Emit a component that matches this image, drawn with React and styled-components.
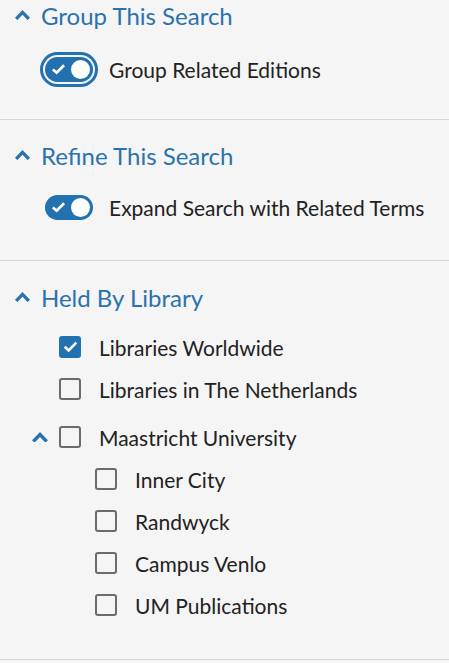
import styled, { createGlobalStyle } from 'styled-components';

const GlobalStyle = createGlobalStyle`
  body {
    margin: 0;
    background: #f5f5f5;
    font-family: Lato, "Open Sans", sans-serif;
    color: #222;
  }
`;

const Panel = styled.div`
  width: 449px;
  background: #f5f5f5;
`;

const Section = styled.section`
  padding: ${(p) => p.$top}px 0 ${(p) => p.$bottom}px 0;
  border-bottom: 1px solid #d6d6d6;
`;

const Heading = styled.button`
  display: flex;
  align-items: center;
  gap: 10px;
  height: 30px;
  padding: 0 0 0 14px;
  border: none;
  background: none;
  font-family: Lato, sans-serif;
  font-size: 24px;
  color: #2b72ad;
  cursor: pointer;
`;

const ToggleRow = styled.label`
  display: flex;
  align-items: center;
  gap: 16px;
  height: 40px;
  margin-top: ${(p) => p.$top || 16}px;
  padding-left: 45px;
  font-size: 21px;
  color: #222;
`;

const Track = styled.span`
  position: relative;
  display: inline-block;
  width: 48px;
  height: 25px;
  border-radius: 13px;
  background: #2271b1;
  flex-shrink: 0;
  ${(p) => p.$focus && `box-shadow: 0 0 0 2px #f5f5f5, 0 0 0 5px #2271b1;`}
`;

const Knob = styled.span`
  position: absolute;
  right: 3px;
  top: 3px;
  width: 19px;
  height: 19px;
  border-radius: 50%;
  background: #fff;
`;

const TrackCheck = styled.svg`
  position: absolute;
  left: 6px;
  top: 6px;
`;

const List = styled.div`
  margin-top: 14px;
`;

const Row = styled.label`
  display: flex;
  align-items: center;
  height: 42px;
  margin-top: ${(p) => p.$top || 0}px;
  padding-left: ${(p) => p.$indent}px;
  font-size: 21px;
  color: #222;
`;

const Caret = styled.span`
  display: flex;
  width: 18px;
  margin-left: -28px;
  margin-right: 10px;
`;

const Box = styled.span`
  display: flex;
  align-items: center;
  justify-content: center;
  box-sizing: border-box;
  width: 22px;
  height: 22px;
  border-radius: 3px;
  border: 2px solid ${(p) => (p.$checked ? '#2271b1' : '#6b6b6b')};
  background: ${(p) => (p.$checked ? '#2271b1' : '#f5f5f5')};
  margin-right: 18px;
  flex-shrink: 0;
`;

const Chevron = ({ size = 17 }) => (
  <svg width={size} height={size * 0.6} viewBox="0 0 16 10">
    <path d="M1.8 8.8 L8 2.4 L14.2 8.8" fill="none" stroke="#2b72ad" strokeWidth="3.2" />
  </svg>
);

const Check = ({ w = 15 }) => (
  <svg width={w} height={w * 0.75} viewBox="0 0 16 12">
    <path d="M1.8 6.2 L6 10 L14.2 1.8" fill="none" stroke="#fff" strokeWidth="2.8" />
  </svg>
);

const Toggle = ({ focus }) => (
  <Track $focus={focus}>
    <TrackCheck width="15" height="12" viewBox="0 0 16 12">
      <path d="M2 6.5 L6 10 L14 2" fill="none" stroke="#fff" strokeWidth="2.8" />
    </TrackCheck>
    <Knob />
  </Track>
);

const Item = ({ label, checked, indent, caret, top }) => (
  <Row $indent={indent} $top={top}>
    {caret && (
      <Caret>
        <Chevron size={18} />
      </Caret>
    )}
    <Box $checked={checked}>{checked && <Check />}</Box>
    {label}
  </Row>
);

export default function App() {
  return (
    <Panel>
      <GlobalStyle />
      <Section $top={0} $bottom={30}>
        <Heading>
          <Chevron />
          Group This Search
        </Heading>
        <ToggleRow $top={19}>
          <Toggle focus />
          Group Related Editions
        </ToggleRow>
      </Section>
      <Section $top={20} $bottom={33}>
        <Heading>
          <Chevron />
          Refine This Search
        </Heading>
        <ToggleRow $top={17}>
          <Toggle />
          Expand Search with Related Terms
        </ToggleRow>
      </Section>
      <Section $top={21} $bottom={33}>
        <Heading>
          <Chevron />
          Held By Library
        </Heading>
        <List>
          <Item label="Libraries Worldwide" checked indent={59} />
          <Item label="Libraries in The Netherlands" indent={59} />
          <Item label="Maastricht University" indent={59} caret top={6} />
          <Item label="Inner City" indent={95} />
          <Item label="Randwyck" indent={95} />
          <Item label="Campus Venlo" indent={95} />
          <Item label="UM Publications" indent={95} />
        </List>
      </Section>
    </Panel>
  );
}
